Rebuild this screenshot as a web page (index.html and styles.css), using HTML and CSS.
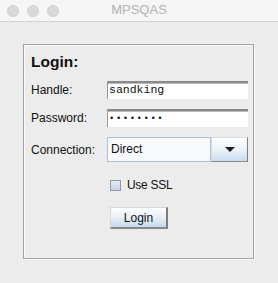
FILE: index.html
```html
<!DOCTYPE html>
<html>
<head>
<meta charset="utf-8">
<link rel="stylesheet" href="styles.css">
</head>
<body>
<div class="window">
  <div class="titlebar">
    <div class="lights"><span class="light"></span><span class="light"></span><span class="light"></span></div>
    <div class="title">MPSQAS</div>
  </div>
  <div class="content">
    <div class="panel">
      <div class="heading">Login:</div>
      <label class="label">Handle:</label>
      <div class="field">sandking</div>
      <label class="label">Password:</label>
      <div class="field pw">••••••••</div>
      <label class="label">Connection:</label>
      <div class="combo">
        <div class="combo-text">Direct</div>
        <div class="combo-btn"><span class="arrow"></span></div>
      </div>
      <div class="check-row">
        <span class="checkbox"></span>
        <span class="check-label">Use SSL</span>
      </div>
      <div class="btn-row">
        <button class="btn">Login</button>
      </div>
    </div>
  </div>
</div>
</body>
</html>
```
FILE: styles.css
```css
* { box-sizing: border-box; }
html, body { margin: 0; padding: 0; }
body {
  width: 278px;
  height: 283px;
  background: #ececec;
  font-family: "Liberation Sans", Arial, sans-serif;
  font-size: 12px;
  color: #111;
  overflow: hidden;
}
.window {
  display: flex;
  flex-direction: column;
  height: 283px;
}
.titlebar {
  position: relative;
  height: 22px;
  background: #f6f6f6;
  border-bottom: 1px solid #d3d3d3;
  display: flex;
  align-items: center;
  justify-content: center;
}
.lights {
  position: absolute;
  left: 7px;
  top: 5px;
  display: flex;
  gap: 8px;
}
.light {
  width: 12px;
  height: 12px;
  border-radius: 50%;
  background: #d9d9d9;
  border: 1px solid #d0d0d0;
}
.title {
  font-size: 13px;
  color: #b2b2b2;
  line-height: 20px;
  margin-top: -1px;
}
.content {
  flex: 1;
  padding: 22px 0 0 23px;
}
.panel {
  width: 231px;
  height: 215px;
  border: 1px solid #a3a3a3;
  box-shadow: 1px 1px 0 #fafafa, inset 1px 1px 0 #fafafa;
  padding: 8px 0 0 7px;
  display: grid;
  grid-template-columns: 76px 141px;
  grid-auto-rows: auto;
  align-content: start;
  row-gap: 10px;
  align-items: center;
}
.heading {
  grid-column: 1 / 3;
  font-size: 15.5px;
  font-weight: bold;
  line-height: 18px;
  height: 18px;
}
.label {
  line-height: 18px;
}
.field {
  height: 18px;
  background: #fff;
  border-top: 2px solid #8a8a8a;
  border-left: 1px solid #9a9a9a;
  box-shadow: inset 0 1px 0 #b9b9b9;
  font-family: "Liberation Mono", "Courier New", monospace;
  font-size: 11.5px;
  line-height: 14px;
  padding-left: 1px;
  color: #111;
}
.pw {
  font-size: 9px;
  letter-spacing: 1.5px;
  line-height: 17px;
}
.combo {
  display: flex;
  height: 25px;
}
.combo-text {
  width: 104px;
  height: 25px;
  border: 1px solid #a9c2dc;
  background: #f7f9fb;
  padding-left: 3px;
  line-height: 23px;
}
.combo-btn {
  width: 37px;
  height: 25px;
  background: linear-gradient(#fdfeff, #eef4fa 45%, #c9dbee);
  border-top: 1px solid #dcdcdc;
  border-left: 1px solid #dcdcdc;
  border-right: 1px solid #7d7d7d;
  border-bottom: 1px solid #8a8a8a;
  display: flex;
  align-items: center;
  justify-content: center;
}
.arrow {
  width: 0;
  height: 0;
  border-left: 5px solid transparent;
  border-right: 5px solid transparent;
  border-top: 5px solid #1e1e1e;
  margin-top: -1px;
}
.check-row {
  grid-column: 2;
  margin-top: 6px;
  padding-left: 3px;
  display: flex;
  align-items: center;
  height: 14px;
}
.checkbox {
  width: 11px;
  height: 11px;
  border: 1px solid #8c99a8;
  background: linear-gradient(#e4ebf2, #c7d4e2);
  margin-right: 6px;
}
.check-label {
  line-height: 14px;
  letter-spacing: -0.3px;
}
.btn-row {
  grid-column: 2;
  margin-top: 5px;
  padding-left: 3px;
  display: flex;
}
.btn {
  width: 58px;
  height: 22px;
  padding: 0;
  font-family: "Liberation Sans", Arial, sans-serif;
  font-size: 12px;
  color: #111;
  background: linear-gradient(#fdfeff, #eaf1f8 45%, #c6d9ed);
  border-top: 1px solid #d8d8d8;
  border-left: 1px solid #d8d8d8;
  border-right: 2px solid #7d7d7d;
  border-bottom: 2px solid #888;
  border-radius: 0;
}
```
